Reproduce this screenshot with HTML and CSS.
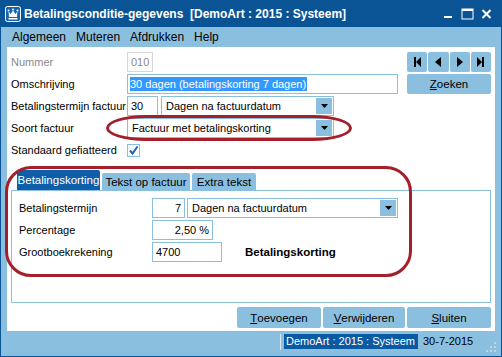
FILE: index.html
```html
<!DOCTYPE html>
<html>

<head>
    <link rel="stylesheet" href="styles.css">
</head>

<body>

    <div class="window">
        <div class="titlebar">
            <svg class="app-icon" width="16" height="16" viewBox="0 0 16 16">
                <rect x="0.5" y="0.5" width="15" height="15" rx="2" fill="#1465b4" stroke="#fff" />
                <path d="M3.5 5.5 L5.5 8 L8 4.5 L10.5 8 L12.5 5.5 L12 11 L4 11 Z" fill="#fff" />
                <circle cx="3.5" cy="4.5" r="1" fill="#fff" />
                <circle cx="8" cy="3.5" r="1" fill="#fff" />
                <circle cx="12.5" cy="4.5" r="1" fill="#fff" />
                <rect x="3.5" y="12" width="9" height="1.5" fill="#fff" />
            </svg>
            <span class="title-text">Betalingsconditie-gegevens  [DemoArt : 2015 : Systeem]</span>
            <svg class="win-controls" width="60" height="27" viewBox="0 0 60 27">
                <rect x="3" y="16" width="8" height="2" fill="#fff" />
                <rect x="21" y="9" width="11" height="10" fill="none" stroke="#fff" stroke-width="1" />
                <rect x="21" y="9" width="11" height="2" fill="#fff" />
                <path d="M41.5 10 L49.5 18 M49.5 10 L41.5 18" stroke="#fff" stroke-width="2" />
            </svg>
        </div>

        <div class="menubar">
            <span class="menu-item">Algemeen</span>
            <span class="menu-item">Muteren</span>
            <span class="menu-item">Afdrukken</span>
            <span class="menu-item">Help</span>
        </div>

        <div class="client">
            <div class="top">
                <div class="fields">
                    <div class="row">
                        <span class="label muted">Nummer</span>
                        <span class="box box-grey w-nummer">010</span>
                    </div>
                    <div class="row">
                        <span class="label">Omschrijving</span>
                        <span class="box box-sel w-omschr"><span class="selected">30 dagen (betalingskorting 7 dagen)</span></span>
                    </div>
                    <div class="row">
                        <span class="label">Betalingstermijn factuur</span>
                        <span class="box w-termijn">30</span>
                        <div class="select w-dagen">
                            <span>Dagen na factuurdatum</span>
                            <span class="drop"><svg width="7" height="4" viewBox="0 0 7 4"><polygon points="0,0 7,0 3.5,4" fill="#000" /></svg></span>
                        </div>
                    </div>
                    <div class="row">
                        <span class="label">Soort factuur</span>
                        <div class="select w-soort">
                            <span>Factuur met betalingskorting</span>
                            <span class="drop"><svg width="7" height="4" viewBox="0 0 7 4"><polygon points="0,0 7,0 3.5,4" fill="#000" /></svg></span>
                        </div>
                    </div>
                    <div class="row">
                        <span class="label">Standaard gefiatteerd</span>
                        <span class="checkbox">
                            <svg width="11" height="11" viewBox="0 0 11 11"><path d="M2 5.5 L4.5 8.5 L9.5 1.5" fill="none" stroke="#1f66ad" stroke-width="2" /></svg>
                        </span>
                    </div>
                </div>

                <div class="nav">
                    <div class="nav-row">
                        <span class="nav-btn"><svg width="7" height="10" viewBox="0 0 7 10"><rect x="0" y="0" width="2" height="10" /><polygon points="7,0 2,5 7,10" /></svg></span>
                        <span class="nav-btn"><svg width="6" height="10" viewBox="0 0 6 10"><polygon points="6,0 0,5 6,10" /></svg></span>
                        <span class="nav-btn"><svg width="6" height="10" viewBox="0 0 6 10"><polygon points="0,0 6,5 0,10" /></svg></span>
                        <span class="nav-btn"><svg width="7" height="10" viewBox="0 0 7 10"><polygon points="0,0 5,5 0,10" /><rect x="5" y="0" width="2" height="10" /></svg></span>
                    </div>
                    <span class="btn"><u>Z</u>oeken</span>
                </div>
            </div>

            <div class="tab-header">
                <span class="tab active w-tab1">Betalingskorting</span>
                <span class="tab w-tab2">Tekst op factuur</span>
                <span class="tab w-tab3">Extra tekst</span>
            </div>
            <div class="tab-panel">
                <div class="row">
                    <span class="label panel-label">Betalingstermijn</span>
                    <span class="box right w-dagen-num">7</span>
                    <div class="select w-dagen2">
                        <span>Dagen na factuurdatum</span>
                        <span class="drop"><svg width="7" height="4" viewBox="0 0 7 4"><polygon points="0,0 7,0 3.5,4" fill="#000" /></svg></span>
                    </div>
                </div>
                <div class="row">
                    <span class="label panel-label">Percentage</span>
                    <span class="box right w-perc">2,50 %</span>
                </div>
                <div class="row">
                    <span class="label panel-label">Grootboekrekening</span>
                    <span class="box w-grootboek">4700</span>
                    <span class="account-name">Betalingskorting</span>
                </div>
            </div>

            <div class="actions">
                <span class="btn w-toev"><u>T</u>oevoegen</span>
                <span class="btn w-verw"><u>V</u>erwijderen</span>
                <span class="btn w-sluit"><u>S</u>luiten</span>
            </div>

            <div class="mark mark-soort"></div>
            <div class="mark mark-tabs"></div>
        </div>

        <div class="statusbar">
            <span class="status-sep"></span>
            <span class="status-user">DemoArt : 2015 : Systeem</span>
            <span class="status-date">30-7-2015</span>
            <svg class="grip" width="11" height="11" viewBox="0 0 11 11">
                <rect x="8" y="0" width="2" height="2" fill="#b9d6ea" />
                <rect x="4" y="4" width="2" height="2" fill="#b9d6ea" />
                <rect x="8" y="4" width="2" height="2" fill="#b9d6ea" />
                <rect x="0" y="8" width="2" height="2" fill="#b9d6ea" />
                <rect x="4" y="8" width="2" height="2" fill="#b9d6ea" />
                <rect x="8" y="8" width="2" height="2" fill="#b9d6ea" />
            </svg>
        </div>
    </div>

</body>

</html>
```

FILE: styles.css
```css
html,
body {
    margin: 0;
    overflow: hidden;
}

body {
    font-family: "Liberation Sans", Arial, sans-serif;
    font-size: 11px;
    color: #000;
}

.window {
    width: 502px;
    height: 357px;
    box-sizing: border-box;
    border: 1px solid #0a5496;
    border-top: none;
    background-color: #8bbfe0;
    display: flex;
    flex-direction: column;
}

/* title bar */
.titlebar {
    height: 27px;
    flex: none;
    display: flex;
    align-items: center;
    padding-left: 4px;
    background-color: #0a5496;
    color: #fff;
    font-size: 12px;
    font-weight: bold;
}

.app-icon {
    flex: none;
    margin-top: 1px;
}

.title-text {
    margin-left: 3px;
    white-space: pre;
}

.win-controls {
    margin-left: auto;
    flex: none;
}

/* menu */
.menubar {
    height: 20px;
    flex: none;
    display: flex;
    padding-left: 6px;
    font-size: 12px;
    line-height: 20px;
}

.menu-item {
    padding: 0 5px;
}

/* white client area */
.client {
    position: relative;
    flex: 1;
    margin: 0 6px;
    padding: 5px 4px 3px;
    background-color: #fff;
    display: flex;
    flex-direction: column;
}

.top {
    display: flex;
    justify-content: space-between;
}

.fields {
    display: flex;
    flex-direction: column;
    gap: 2px;
}

.row {
    display: flex;
    align-items: center;
    height: 20px;
}

.label {
    width: 116px;
    flex: none;
}

.muted {
    color: #8a8a8a;
}

.box {
    height: 20px;
    box-sizing: border-box;
    border: 1px solid #8bbfe0;
    padding: 0 3px;
    line-height: 18px;
    white-space: nowrap;
    overflow: hidden;
}

.box.right {
    text-align: right;
}

.box-grey {
    border-color: #d6d6d6;
    color: #8a8a8a;
}

.box-sel {
    padding-left: 2px;
}

.selected {
    background-color: #3399ff;
    color: #fff;
    padding: 1px 1px 1px 0;
}

.w-nummer { width: 26px; }
.w-omschr { width: 271px; }
.w-termijn { width: 31px; }
.w-dagen { width: 173px; margin-left: 3px; }
.w-soort { width: 207px; }

.select {
    height: 20px;
    box-sizing: border-box;
    border: 1px solid #8bbfe0;
    padding: 0 1px 0 4px;
    display: flex;
    align-items: center;
    justify-content: space-between;
}

.drop {
    width: 16px;
    height: 16px;
    background-color: #8bbfe0;
    display: flex;
    align-items: center;
    justify-content: center;
}

.checkbox {
    width: 13px;
    height: 13px;
    box-sizing: border-box;
    border: 1px solid #8bbfe0;
    display: flex;
    align-items: center;
    justify-content: center;
}

/* navigation buttons */
.nav {
    width: 84px;
    display: flex;
    flex-direction: column;
    gap: 2px;
}

.nav-row {
    display: grid;
    grid-template-columns: repeat(4, 1fr);
    gap: 1px;
    height: 20px;
}

.nav-btn {
    background-color: #8bbfe0;
    border-radius: 2px;
    display: flex;
    align-items: center;
    justify-content: center;
}

.btn {
    height: 20px;
    background-color: #8bbfe0;
    border-radius: 2px;
    display: flex;
    align-items: center;
    justify-content: center;
    font-size: 11.5px;
}

/* tabs */
.tab-header {
    margin-top: 10px;
    height: 20px;
    display: flex;
    align-items: flex-end;
    gap: 2px;
    padding-left: 6px;
}

.tab {
    height: 17px;
    background-color: #8bbfe0;
    display: flex;
    align-items: center;
    justify-content: center;
    border-radius: 2px 2px 0 0;
    font-size: 11.5px;
}

.tab.active {
    height: 20px;
    background-color: #0f5ea8;
    color: #fff;
}

.w-tab1 { width: 83px; }
.w-tab2 { width: 88px; }
.w-tab3 { width: 64px; }

.tab-panel {
    height: 113px;
    box-sizing: border-box;
    border: 1px solid #8bbfe0;
    padding: 7px 7px;
    display: flex;
    flex-direction: column;
    gap: 2px;
}

.panel-label {
    width: 133px;
}

.w-dagen-num { width: 33px; }
.w-dagen2 { width: 211px; margin-left: 2px; }
.w-perc { width: 61px; }
.w-grootboek { width: 70px; }

.account-name {
    margin-left: 23px;
    font-weight: bold;
    font-size: 11.5px;
}

/* bottom buttons */
.actions {
    margin-top: 4px;
    display: flex;
    justify-content: flex-end;
    gap: 2px;
}

.actions .btn {
    height: 21px;
}

.w-toev { width: 84px; }
.w-verw { width: 82px; }
.w-sluit { width: 84px; }

/* red annotation rings */
.mark {
    position: absolute;
    box-sizing: border-box;
    border: 3px solid #a3202b;
}

.mark-soort {
    left: 99px;
    top: 68px;
    width: 246px;
    height: 26px;
    border-radius: 40px / 13px;
}

.mark-tabs {
    left: -2px;
    top: 119px;
    width: 407px;
    height: 111px;
    border-radius: 26px;
}

/* status bar */
.statusbar {
    height: 25px;
    flex: none;
    display: flex;
    align-items: flex-start;
    padding-top: 3px;
    box-sizing: border-box;
}

.status-sep {
    width: 1px;
    height: 16px;
    margin-left: 279px;
    background-color: #d8eaf6;
}

.status-user {
    margin-left: 3px;
    width: 134px;
    height: 15px;
    line-height: 15px;
    box-sizing: border-box;
    padding-left: 2px;
    background-color: #0a5aa3;
    color: #fff;
}

.status-date {
    margin-left: 5px;
    line-height: 15px;
}

.grip {
    margin-left: auto;
    margin-right: 4px;
    margin-top: 8px;
}
```
